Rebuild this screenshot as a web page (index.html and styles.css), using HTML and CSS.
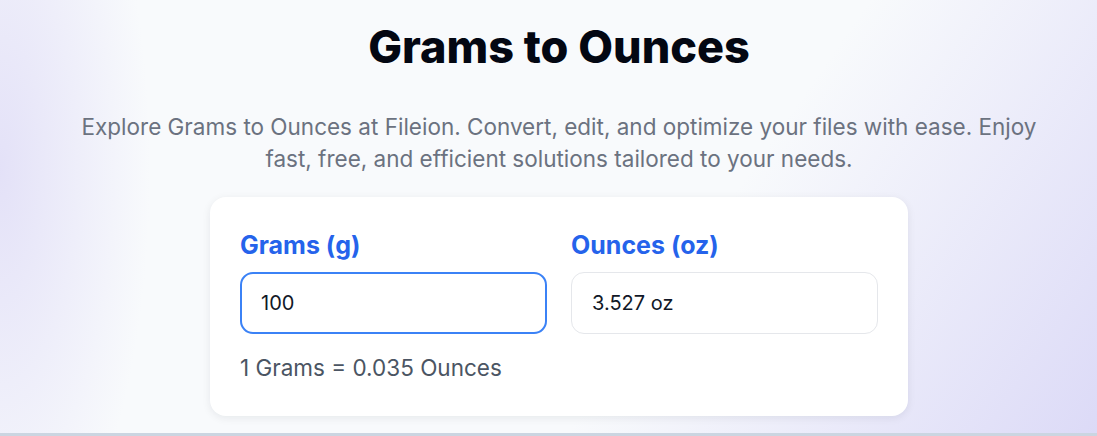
FILE: index.html
```html
<!DOCTYPE html>
<html lang="en">
<head>
    <meta charset="UTF-8">
    <meta name="viewport" content="width=device-width, initial-scale=1.0">
    <title>Grams to Ounces</title>
    <link rel="stylesheet" href="styles.css">
</head>
<body>
    <main class="page">
        <h1 class="title">Grams to Ounces</h1>
        <p class="lead">Explore Grams to Ounces at Fileion. Convert, edit, and optimize your files with ease. Enjoy fast, free, and efficient solutions tailored to your needs.</p>

        <div class="card">
            <div class="fields">
                <div class="field">
                    <label for="grams">Grams (g)</label>
                    <input type="text" id="grams" class="input input-focus" value="100" autofocus>
                </div>
                <div class="field">
                    <label for="ounces">Ounces (oz)</label>
                    <input type="text" id="ounces" class="input" value="3.527 oz" readonly>
                </div>
            </div>
            <p class="rate">1 Grams = 0.035 Ounces</p>
        </div>
    </main>
    <div class="divider"></div>
</body>
</html>
```

FILE: styles.css
```css
html, body {
    height: 100%;
}

body {
    margin: 0;
    font-family: Inter, "Noto Sans", Arial, sans-serif;
    background-color: #f8fafc;
    background-image:
        radial-gradient(ellipse 150px 420px at 0 170px, rgba(224, 221, 247, 0.85), rgba(248, 250, 252, 0)),
        linear-gradient(125deg, rgba(248, 250, 252, 0) 62%, #dcdaf7 100%);
    display: flex;
    flex-direction: column;
    overflow: hidden;
}

.page {
    flex: 1;
    width: 980px;
    margin: 0 auto;
    padding: 22px 0 0 21px;
    text-align: center;
}

.title {
    margin: 0;
    font-size: 45px;
    line-height: 50px;
    font-weight: 800;
    color: #030712;
}

.lead {
    margin: 39px 0 0;
    font-size: 22.5px;
    line-height: 32px;
    color: #6b7280;
}

.card {
    width: 698px;
    box-sizing: border-box;
    margin: 22px auto 0;
    padding: 33px 30px 33px;
    background: #fff;
    border-radius: 16px;
    box-shadow: 0 2px 8px rgba(15, 23, 42, 0.08);
    text-align: left;
}

.fields {
    display: grid;
    grid-template-columns: 1fr 1fr;
    gap: 24px;
}

.field label {
    display: block;
    margin-bottom: 12px;
    font-size: 25px;
    line-height: 30px;
    font-weight: 700;
    color: #2563eb;
}

.input {
    width: 100%;
    height: 62px;
    box-sizing: border-box;
    padding: 0 20px;
    border: 1px solid #e5e7eb;
    border-radius: 13px;
    font-family: inherit;
    font-size: 20px;
    color: #111827;
    background: #fff;
    outline: none;
}

.input-focus {
    border: 2px solid #3b82f6;
    padding: 0 19px;
}

.rate {
    margin: 19px 0 0;
    font-size: 22.5px;
    line-height: 30px;
    color: #4b5563;
}

.divider {
    height: 3px;
    background: #cbd5e1;
}
```
